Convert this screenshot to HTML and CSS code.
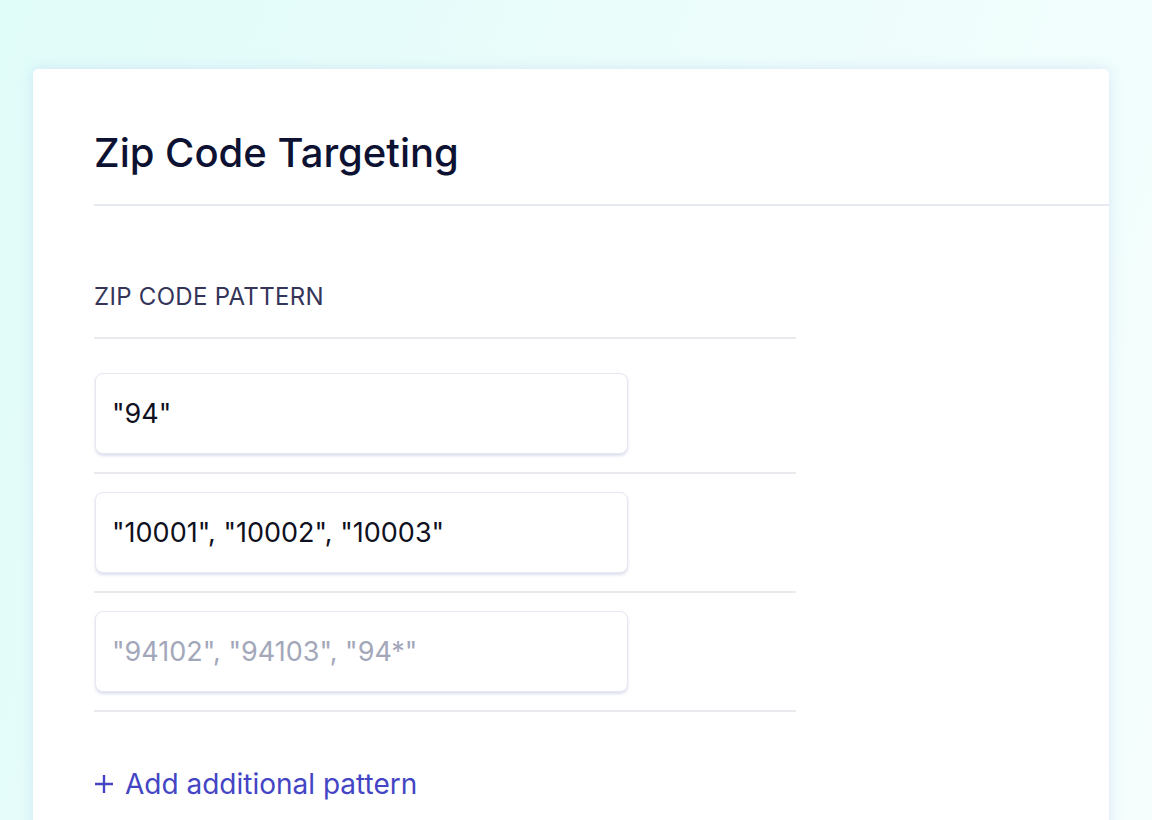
FILE: index.html
```html
<!DOCTYPE html>
<html lang="en">
<head>
<meta charset="utf-8">
<title>Zip Code Targeting</title>
<link rel="stylesheet" href="styles.css">
</head>
<body>
<main class="stage">
  <section class="card">
    <header class="card-head">
      <h1 class="title">Zip Code Targeting</h1>
    </header>
    <div class="card-body">
      <div class="field-label">ZIP CODE PATTERN</div>
      <div class="rows">
        <div class="row"><div class="input">"94"</div></div>
        <div class="row"><div class="input">"10001", "10002", "10003"</div></div>
        <div class="row"><div class="input placeholder">"94102", "94103", "94*"</div></div>
      </div>
      <a class="add-link" href="#"><svg class="plus" width="20" height="20" viewBox="0 0 20 20" aria-hidden="true"><path d="M10 1v18M1 10h18" stroke="currentColor" stroke-width="2.4" fill="none"/></svg>Add additional pattern</a>
    </div>
  </section>
</main>
</body>
</html>
```
FILE: styles.css
```css
html, body {
  margin: 0;
  padding: 0;
  height: 100%;
}
body {
  font-family: "Inter", "Noto Sans", sans-serif;
  background: linear-gradient(110deg, #e0fcf9 0%, #ebfdfb 45%, #f5fefd 100%);
  overflow: hidden;
}
.stage {
  padding: 69px 43px 0 33px;
}
.card {
  background: #ffffff;
  border-radius: 5px 5px 0 0;
  box-shadow: 0 0 14px rgba(170, 190, 235, 0.35);
  height: 800px;
}
.card-head {
  margin-left: 61px;
  border-bottom: 2px solid #e7e9f2;
  padding: 60px 0 27px;
}
.title {
  margin: 0;
  font-size: 40px;
  line-height: 48px;
  font-weight: 500;
  color: #0d1233;
}
.card-body {
  padding: 0 0 0 61px;
  width: 702px;
}
.field-label {
  margin-top: 77px;
  padding-bottom: 26px;
  font-size: 24px;
  line-height: 28px;
  letter-spacing: 0.3px;
  color: #35355a;
  border-bottom: 2px solid #e8eaee;
}
.rows {
  padding-top: 16px;
}
.row {
  padding: 18px 0 18px 1px;
  border-bottom: 2px solid #e8eaee;
}
.input {
  box-sizing: border-box;
  width: 533px;
  height: 81px;
  border: 1px solid #e6e7f1;
  border-radius: 8px;
  box-shadow: 0 2px 3px rgba(200, 204, 228, 0.6);
  padding: 0 16px;
  display: flex;
  align-items: center;
  font-size: 27px;
  color: #0f1020;
  background: #fff;
}
.input.placeholder {
  color: #a3a7ba;
}
.add-link {
  display: inline-flex;
  align-items: center;
  gap: 11px;
  margin-top: 54px;
  font-size: 28px;
  line-height: 36px;
  color: #4445c4;
  text-decoration: none;
}
.plus {
  display: block;
  flex: none;
}
```
